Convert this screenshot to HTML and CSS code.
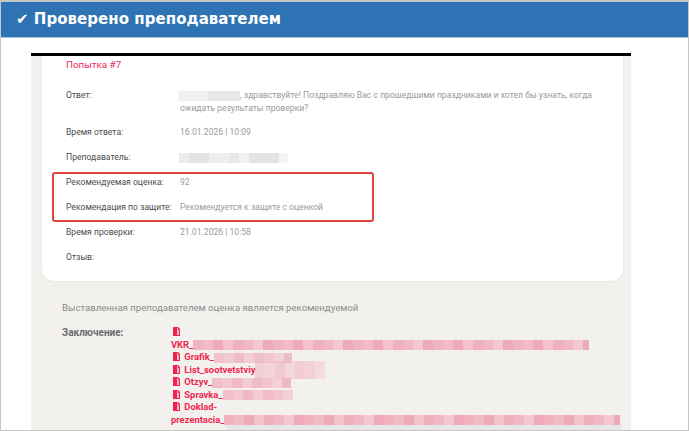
FILE: index.html
```html
<!DOCTYPE html>
<html lang="ru">
<head>
<meta charset="utf-8">
<title>Проверено преподавателем</title>
<link rel="stylesheet" href="styles.css">
</head>
<body>
<div class="window">
  <header class="banner">✔ Проверено преподавателем</header>
  <main class="sheet">
    <section class="card">
      <h2 class="attempt">Попытка #7</h2>
      <div class="row row-answer">
        <div class="label">Ответ:</div>
        <div class="value"><span class="blur blur-name"></span>, здравствуйте! Поздравляю Вас с прошедшими праздниками и хотел бы узнать, когда ожидать результаты проверки?</div>
      </div>
      <div class="row">
        <div class="label">Время ответа:</div>
        <div class="value">16.01.2026 | 10:09</div>
      </div>
      <div class="row">
        <div class="label">Преподаватель:</div>
        <div class="value"><span class="blur blur-teacher"></span></div>
      </div>
      <div class="highlight">
        <div class="row">
          <div class="label">Рекомендуемая оценка:</div>
          <div class="value">92</div>
        </div>
        <div class="row">
          <div class="label">Рекомендация по защите:</div>
          <div class="value">Рекомендуется к защите с оценкой</div>
        </div>
      </div>
      <div class="row">
        <div class="label">Время проверки:</div>
        <div class="value">21.01.2026 | 10:58</div>
      </div>
      <div class="row">
        <div class="label">Отзыв:</div>
        <div class="value"></div>
      </div>
    </section>
    <section class="footer">
      <p class="note">Выставленная преподавателем оценка является рекомендуемой</p>
      <div class="conclusion">
        <div class="conclusion-label">Заключение:</div>
        <div class="files">
          <a class="file"><svg class="file-icon" viewBox="0 0 7 9"><path d="M0 0h5l2 2v7H0z" fill="#f0224f"/><path d="M4 1h1v2h1v5H4z" fill="#ffb3c4"/></svg> <br>VKR_<span class="blur blur-pink blur-vkr"></span></a>
          <a class="file"><svg class="file-icon" viewBox="0 0 7 9"><path d="M0 0h5l2 2v7H0z" fill="#f0224f"/><path d="M4 1h1v2h1v5H4z" fill="#ffb3c4"/></svg> Grafik_<span class="blur blur-pink blur-grafik"></span></a>
          <a class="file"><svg class="file-icon" viewBox="0 0 7 9"><path d="M0 0h5l2 2v7H0z" fill="#f0224f"/><path d="M4 1h1v2h1v5H4z" fill="#ffb3c4"/></svg> List_sootvetstviy<span class="blur blur-pink blur-list"></span></a>
          <a class="file"><svg class="file-icon" viewBox="0 0 7 9"><path d="M0 0h5l2 2v7H0z" fill="#f0224f"/><path d="M4 1h1v2h1v5H4z" fill="#ffb3c4"/></svg> Otzyv_<span class="blur blur-pink blur-otzyv"></span></a>
          <a class="file"><svg class="file-icon" viewBox="0 0 7 9"><path d="M0 0h5l2 2v7H0z" fill="#f0224f"/><path d="M4 1h1v2h1v5H4z" fill="#ffb3c4"/></svg> Spravka_<span class="blur blur-pink blur-spravka"></span></a>
          <a class="file"><svg class="file-icon" viewBox="0 0 7 9"><path d="M0 0h5l2 2v7H0z" fill="#f0224f"/><path d="M4 1h1v2h1v5H4z" fill="#ffb3c4"/></svg> Doklad-<br>prezentacia_<span class="blur blur-pink blur-doklad"></span></a>
        </div>
      </div>
    </section>
  </main>
</div>
</body>
</html>
```
FILE: styles.css
```css
* { box-sizing: border-box; }
html, body { margin: 0; height: 100%; overflow: hidden; background: #fff; }
body { font-family: Roboto, "Noto Sans", sans-serif; font-size: 9.5px; color: #4a4a4a; }

.window {
  height: 431px;
  border: 1px solid #c6c6c6;
  border-top-width: 2px;
  overflow: hidden;
  display: flex;
  flex-direction: column;
}
.banner {
  flex: none;
  height: 36px;
  padding-left: 15px;
  background: #2e74b5;
  border-bottom: 1px solid #a9c4df;
  color: #fff;
  font: bold 15px/35px "DejaVu Sans", sans-serif;
  letter-spacing: 0.04px;
}
.sheet {
  flex: none;
  width: 600px;
  margin: 15px 0 0 30px;
  height: 390px;
  background: #f3f1ed;
  border-top: 3px solid #000;
  padding: 0 8px 0 11px;
}
.card {
  height: 225px;
  background: #fff;
  border-radius: 0 0 12px 12px;
  box-shadow: 0 0 2px rgba(0, 0, 0, .12);
  padding: 0 24px;
}
.attempt {
  margin: 0;
  height: 18px;
  font-size: 9.8px;
  font-weight: 400;
  line-height: 17px;
  color: #f0285c;
}
.row {
  display: grid;
  grid-template-columns: 114px 1fr;
  height: 25px;
  align-items: center;
  line-height: 13px;
}
.row-answer { height: 46px; padding-top: 15px; align-items: start; }
.label { color: #4d4d4d; font-size: 8.6px; white-space: nowrap; }
.value { color: #9a9a9a; font-size: 8.6px; }
.highlight {
  position: relative;
  width: 322px;
  height: 50px;
  margin-left: -14px;
  padding-left: 14px;
}
.highlight::after {
  content: "";
  position: absolute;
  inset: 2px 0 -2px 0;
  border: 2px solid #e0443e;
  border-radius: 3px;
}
.footer { padding: 0 0 0 20px; }
.note { margin: 0; padding-top: 20px; height: 45px; color: #8b8b8b; font-size: 9.6px; line-height: 13px; }
.conclusion { display: grid; grid-template-columns: 109px 1fr; }
.conclusion-label { font-weight: 700; font-size: 10px; color: #6d6d6d; line-height: 13px; }
.file {
  display: block;
  font-weight: 700;
  font-size: 9.4px;
  line-height: 12.5px;
  color: #ef2650;
  white-space: nowrap;
}
.file-icon { width: 7px; height: 9px; margin-left: 2px; margin-right: 2px; vertical-align: -1px; }
.blur {
  display: inline-block;
  vertical-align: middle;
  margin-block: -4px;
}
.blur-pink {
  height: 10px;
  background: linear-gradient(90deg,
    #f0b3bf 0 10px, #f2bcc7 10px 20px, #eeaab8 20px 30px, #f3c2cb 30px 40px,
    #efb0bd 40px 50px, #f1b8c3 50px 60px, #f4c8d0 60px 70px, #edabb9 70px 80px) 0 0 / 80px 100%;
}
.blur-vkr { width: 396px; }
.blur-grafik { width: 78px; opacity: .75; }
.blur-list { width: 70px; height: 18px; opacity: .55; }
.blur-otzyv { width: 79px; opacity: .8; }
.blur-spravka { width: 70px; opacity: .8; }
.blur-doklad { width: 396px; box-shadow: 2px 9px 0 #e4e7ea; }
.blur-name {
  width: 62px;
  height: 10px;
  margin-left: -2px;
  background: linear-gradient(90deg, #f1f1f1 0 30px, #e7e7e7 30px 100%);
}
.blur-teacher {
  width: 109px;
  height: 10px;
  margin-left: -1px;
  background: linear-gradient(90deg,
    #ececec 0 10px, #e4e4e4 10px 30px, #eeeeee 30px 50px, #e8e8e8 50px 60px,
    #f2f2f2 60px 70px, #e4e4e4 70px 100px, #f5f5f5 100px 109px);
}
```
